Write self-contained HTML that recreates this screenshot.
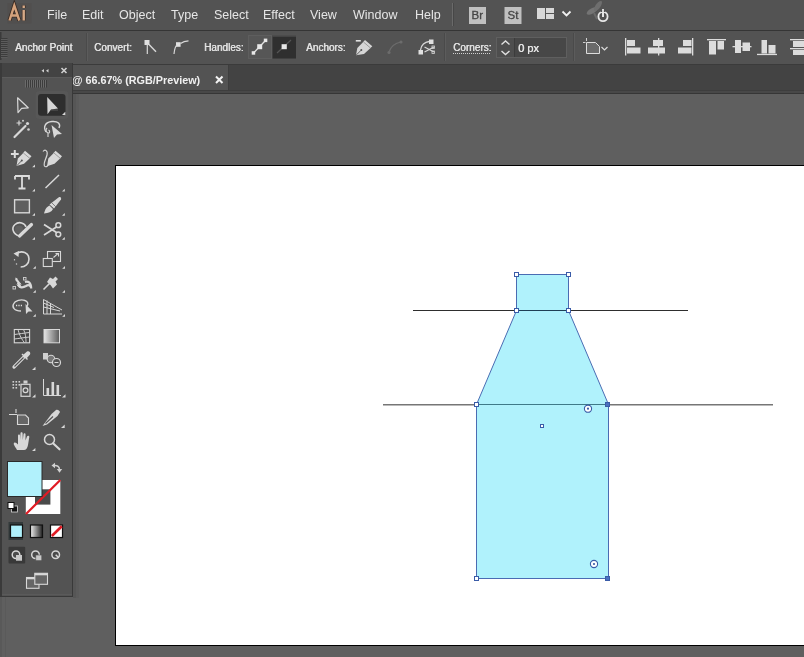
<!DOCTYPE html>
<html><head><meta charset="utf-8">
<style>
*{margin:0;padding:0;box-sizing:border-box}
html,body{width:804px;height:657px;overflow:hidden;background:#5f5f5f;font-family:"Liberation Sans",sans-serif}
.a{position:absolute}
.mi,.cl,.t{will-change:transform}
#menubar{left:0;top:0;width:804px;height:30px;background:#535353}
#mline{left:0;top:30px;width:804px;height:1px;background:#353535}
#ctrl{left:0;top:31px;width:804px;height:33px;background:#535353}
#cline{left:0;top:64px;width:804px;height:1px;background:#3b3b3b}
#tabbar{left:0;top:65px;width:804px;height:25px;background:#434343}
#tab{left:0;top:65px;width:228px;height:25px;background:#535353}
#tline{left:0;top:90px;width:804px;height:4px;background:linear-gradient(#3d3d3d 0,#3d3d3d 1px,#484848 1px,#484848 3px,#363636 3px)}
.mi{top:8px;color:#e6e6e6;font-size:12.5px;white-space:nowrap}
.cl{color:#e2e2e2;font-size:10px;white-space:nowrap;top:41.5px;text-shadow:0.4px 0 0 #e2e2e2}
#artboard{left:115px;top:165px;width:700px;height:481px;background:#fff;border:1px solid #000}
#panel{left:0;top:63px;width:73px;height:534px;background:#535353;border-right:1px solid #3a3a3a;border-bottom:1px solid #3a3a3a}
#phead{left:0;top:63px;width:72px;height:14px;background:#444}
</style></head>
<body>
<div class="a" id="menubar"></div>
<div class="a" id="mline"></div>
<div class="a" id="ctrl"></div>
<div class="a" id="cline"></div>
<div class="a" id="tabbar"></div>
<div class="a" id="tab"></div>
<div class="a" id="tline"></div>

<!-- menu -->
<svg class="a" style="left:0;top:0" width="40" height="30" viewBox="0 0 40 30">
 <rect x="7.5" y="3" width="24" height="20.5" fill="#514f4e"/>
 <path d="M9.5 20.5 L14.3 5.5 L19.3 20.5 M11.3 15.5 L17.5 15.5" fill="none" stroke="#3a2a22" stroke-width="4"/>
 <path d="M23.7 10 L23.7 20.5 M23.7 5.5 L23.7 8" fill="none" stroke="#3a2a22" stroke-width="3.8"/>
 <path d="M9.5 20.5 L14.3 5.5 L19.3 20.5 M11.3 15.5 L17.5 15.5" fill="none" stroke="#d4a27c" stroke-width="2.4"/>
 <path d="M23.7 10 L23.7 20.5 M23.7 5.5 L23.7 8" fill="none" stroke="#d6aa88" stroke-width="2.4"/>
</svg>
<div class="a mi" style="left:47px">File</div>
<div class="a mi" style="left:82px">Edit</div>
<div class="a mi" style="left:119px">Object</div>
<div class="a mi" style="left:171px">Type</div>
<div class="a mi" style="left:214px">Select</div>
<div class="a mi" style="left:263px">Effect</div>
<div class="a mi" style="left:310px">View</div>
<div class="a mi" style="left:353px">Window</div>
<div class="a mi" style="left:415px">Help</div>

<!-- control bar -->
<div class="a cl" style="left:15px">Anchor Point</div>
<div class="a cl" style="left:94px">Convert:</div>
<div class="a cl" style="left:204px">Handles:</div>
<div class="a cl" style="left:306px">Anchors:</div>
<div class="a cl" style="left:453px">Corners:</div>

<!-- tab -->
<div class="a t" style="left:72px;top:73.5px;color:#f0f0f0;font-size:10.8px;font-weight:bold;white-space:nowrap">@ 66.67% (RGB/Preview)</div>


<svg class="a t" style="left:0;top:0" width="804" height="94" viewBox="0 0 804 94">
 <!-- menu separators -->
 <rect x="452" y="3" width="1" height="23" fill="#6a6a6a"/>
 <rect x="453" y="3" width="1" height="23" fill="#474747"/>
 <!-- Br / St -->
 <rect x="469" y="7" width="17" height="17" fill="#c0c0c0"/>
 <text x="477.3" y="19.2" font-size="11.5" text-anchor="middle" fill="#454545" stroke="#454545" stroke-width="0.3" font-family="Liberation Sans">Br</text>
 <rect x="504.5" y="7" width="17" height="17" fill="#c0c0c0"/>
 <text x="513" y="19.2" font-size="11.5" text-anchor="middle" fill="#454545" stroke="#454545" stroke-width="0.3" font-family="Liberation Sans">St</text>
 <!-- workspace -->
 <rect x="537" y="8" width="8" height="11" fill="#d8d8d8"/>
 <rect x="546" y="8" width="8" height="5" fill="#d8d8d8"/>
 <rect x="546" y="14" width="8" height="5" fill="#d8d8d8"/>
 <path d="M562.5 11.5 L566.5 15.5 L570.5 11.5" stroke="#f0f0f0" stroke-width="1.8" fill="none"/>
 <!-- sync -->
 <ellipse cx="592" cy="11" rx="6" ry="2.6" transform="rotate(-30 592 11)" fill="#747474"/>
 <ellipse cx="598" cy="6" rx="6" ry="2.4" transform="rotate(-55 598 6)" fill="#6e6e6e"/>
 <path d="M594 13 L597 19" stroke="#6a6a6a" stroke-width="2"/>
 <circle cx="603" cy="16.5" r="4.6" stroke="#e8e8e8" stroke-width="1.8" fill="none"/>
 <rect x="602.1" y="9" width="1.8" height="8" fill="#e8e8e8"/>
 <rect x="601" y="9" width="4" height="3" fill="#535353"/>
 <rect x="602.1" y="9" width="1.8" height="8" fill="#e8e8e8"/>
 <!-- control bar grip -->
 <rect x="0" y="32" width="1.5" height="28" fill="#3a3a3a"/>
 <g fill="#3c3c3c"><rect x="1" y="38" width="6.5" height="1"/><rect x="1" y="40" width="6.5" height="1"/><rect x="1" y="42" width="6.5" height="1"/><rect x="1" y="44" width="6.5" height="1"/><rect x="1" y="46" width="6.5" height="1"/><rect x="1" y="48" width="6.5" height="1"/><rect x="1" y="50" width="6.5" height="1"/><rect x="1" y="52" width="6.5" height="1"/><rect x="1" y="54" width="6.5" height="1"/><rect x="1" y="56" width="6.5" height="1"/></g>
 <g fill="#5c5c5c"><rect x="1" y="39" width="6.5" height="1"/><rect x="1" y="41" width="6.5" height="1"/><rect x="1" y="43" width="6.5" height="1"/><rect x="1" y="45" width="6.5" height="1"/><rect x="1" y="47" width="6.5" height="1"/><rect x="1" y="49" width="6.5" height="1"/><rect x="1" y="51" width="6.5" height="1"/><rect x="1" y="53" width="6.5" height="1"/><rect x="1" y="55" width="6.5" height="1"/><rect x="1" y="57" width="6.5" height="1"/></g>
 <!-- control separators -->
 <rect x="86" y="33" width="1" height="28" fill="#4a4a4a"/>
 <rect x="87" y="33" width="1" height="28" fill="#5c5c5c"/>
 <rect x="444" y="33" width="1" height="28" fill="#4a4a4a"/>
 <rect x="445" y="33" width="1" height="28" fill="#5c5c5c"/>
 <rect x="573" y="33" width="1" height="28" fill="#4a4a4a"/>
 <rect x="574" y="33" width="1" height="28" fill="#5c5c5c"/>
 <!-- convert icons -->
 <rect x="144.5" y="40" width="5" height="5" fill="#e0e0e0"/>
 <path d="M147.3 44 L147.3 54" stroke="#d8d8d8" stroke-width="1.2"/>
 <path d="M149 44.5 L156 51.8" stroke="#d8d8d8" stroke-width="1.4"/>
 <rect x="176" y="42.2" width="4.6" height="4.6" fill="#e0e0e0"/>
 <path d="M174 54 C174.5 49 175.5 46 177 45 M180.5 43.5 C183 41.5 185.5 40.8 188.5 40.8" stroke="#d8d8d8" stroke-width="1.2" fill="none"/>
 <!-- handles buttons -->
 <rect x="248.5" y="35.5" width="23" height="23" fill="#565656" stroke="#5e5e5e" stroke-width="1"/>
 <path d="M253.5 53 L265.5 40.5" stroke="#e0e0e0" stroke-width="1.3"/>
 <rect x="257.2" y="44.2" width="5" height="5" fill="#e8e8e8"/>
 <rect x="263.8" y="38.6" width="3.5" height="3.5" fill="#e8e8e8"/>
 <rect x="251.7" y="51.2" width="3.5" height="3.5" fill="#e8e8e8"/>
 <rect x="272.5" y="35.5" width="23.5" height="23" fill="#2f2f2f"/>
 <rect x="272.5" y="35.5" width="23.5" height="1" fill="#5a5a5a"/>
 <path d="M277 53 L291 40" stroke="#555" stroke-width="1.2"/>
 <rect x="281.6" y="44.2" width="5.2" height="5" fill="#e8e8e8"/>
 <!-- anchors -->
 <rect x="355.8" y="40" width="5" height="1.6" fill="#e0e0e0"/>
 <path d="M356 55.3 L357.3 48 L362 43.3 L365 40 L372.3 46.2 L369.2 49.2 L364 54 Z" fill="#d6d6d6"/>
 <path d="M356.3 55 L361 50.3" stroke="#535353" stroke-width="0.9"/>
 <circle cx="361.3" cy="50" r="1" fill="#535353"/>
 <path d="M363.5 42 L370.5 48" stroke="#8a8a8a" stroke-width="0.8"/>
 <path d="M389 52 C391 46 395 43 401 42" stroke="#6c6c6c" stroke-width="1.2" fill="none"/>
 <circle cx="389" cy="52.5" r="1.6" fill="#6c6c6c"/><circle cx="401" cy="42" r="1.6" fill="#6c6c6c"/>
 <path d="M420.5 50 C421 45 425 42 429 41.5" stroke="#d8d8d8" stroke-width="1.3" fill="none"/>
 <rect x="418.5" y="50" width="4.5" height="4.5" fill="#e0e0e0"/>
 <rect x="429" y="39.5" width="4.5" height="4.5" fill="#e0e0e0"/>
 <path d="M424.5 47 L434 52 M424.5 52 L434 47" stroke="#d8d8d8" stroke-width="1.2"/>
 <rect x="432" y="46" width="2.5" height="2.5" fill="none" stroke="#d8d8d8" stroke-width="0.8"/>
 <rect x="432" y="51" width="2.5" height="2.5" fill="none" stroke="#d8d8d8" stroke-width="0.8"/>
 <!-- corners dotted underline -->
 <path d="M453 53.5 L490 53.5" stroke="#cfcfcf" stroke-width="1" stroke-dasharray="1 1"/>
 <!-- input -->
 <rect x="496.5" y="37.5" width="70" height="20" fill="#4b4b4b" stroke="#5f5f5f" stroke-width="1"/>
 <rect x="497" y="38" width="17" height="19" fill="#4e4e4e"/>
 <rect x="514" y="38" width="1" height="19" fill="#3c3c3c"/>
 <rect x="515" y="38" width="51" height="19" fill="#474747"/>
 <path d="M501.5 44.5 L505.5 41 L509.5 44.5 M501.5 51 L505.5 54.5 L509.5 51" stroke="#e0e0e0" stroke-width="1.4" fill="none"/>
 <!-- transform icon -->
 <path d="M586.5 42.5 L595.5 42.5 L599.5 46.5 L599.5 53.5 L586.5 53.5 Z" fill="#6a6a6a" stroke="#dcdcdc" stroke-width="1"/>
 <path d="M586.5 38 L586.5 41 M583 42.5 L585.5 42.5" stroke="#cfcfcf" stroke-width="1"/>
 <path d="M601.5 47 L604.5 50 L607.5 47" stroke="#dcdcdc" stroke-width="1.2" fill="none"/>
 <!-- align icons -->
 <g fill="#dcdcdc">
  <rect x="625" y="38" width="1.3" height="17.5"/>
  <rect x="627" y="40" width="8" height="6"/><rect x="627" y="47.5" width="13.5" height="6"/>
  <rect x="658" y="38" width="1.3" height="17.5"/>
  <rect x="653" y="40" width="10" height="6"/><rect x="648" y="47.5" width="17" height="6"/>
  <rect x="692" y="38" width="1.3" height="17.5"/>
  <rect x="683" y="40" width="8.5" height="6"/><rect x="678" y="47.5" width="13.5" height="6"/>
  <rect x="707" y="39" width="19" height="1.3"/>
  <rect x="709" y="41" width="7" height="13.5"/><rect x="717.5" y="41" width="6.5" height="8.5"/>
  <rect x="732.5" y="46" width="19" height="1.3"/>
  <rect x="735" y="40" width="6" height="13"/><rect x="742.5" y="42.5" width="7.5" height="8.5"/>
  <rect x="757" y="53.8" width="20" height="1.3"/>
  <rect x="761.5" y="40" width="5.5" height="13.5"/><rect x="768.5" y="45" width="7" height="8.5"/>
  <rect x="790" y="39" width="14" height="1.3"/>
  <rect x="793" y="41" width="11" height="6"/>
  <rect x="790" y="48" width="14" height="1.3"/>
  <rect x="793" y="50" width="11" height="5"/>
 </g>
 <!-- tab close -->
 <path d="M216 76.5 L222.5 83 M222.5 76.5 L216 83" stroke="#f2f2f2" stroke-width="2"/>
 <rect x="228" y="65" width="1" height="25" fill="#3e3e3e"/>
</svg>

<div class="a" style="left:73px;top:94px;width:3px;height:504px;background:#565656"></div>
<div class="a" style="left:76px;top:94px;width:3px;height:504px;background:#5b5b5b"></div>
<div class="a" style="left:0;top:597px;width:2px;height:60px;background:#595959"></div>
<div class="a" style="left:5px;top:597px;width:1px;height:60px;background:#5a5a5a"></div>
<!-- artboard -->
<div class="a" id="artboard"></div>


<svg class="a" style="left:0;top:0" width="804" height="657" viewBox="0 0 804 657">
 <line x1="413" y1="310.5" x2="688" y2="310.5" stroke="#2e2e2e" stroke-width="1"/>
 <line x1="383" y1="404.7" x2="773" y2="404.7" stroke="#767676" stroke-width="1.5"/>
 <path d="M516.5 274.5 H568.5 V310.5 H516.5 Z" fill="#b0f2fc" stroke="#4a6cb3" stroke-width="1"/>
 <path d="M516.5 310.5 L568.5 310.5 L608.5 404.5 L476.5 404.5 Z" fill="#b0f2fc" stroke="#4a6cb3" stroke-width="1"/>
 <path d="M476.5 404.5 H608.5 V578.5 H476.5 Z" fill="#b0f2fc" stroke="#4a6cb3" stroke-width="1"/>
 <line x1="516.5" y1="310.5" x2="568.5" y2="310.5" stroke="#1f3f55" stroke-width="1"/>
 <line x1="476.5" y1="404.5" x2="608.5" y2="404.5" stroke="#3f7a88" stroke-width="1.2"/>
 <g fill="#fff" stroke="#3a5ca8" stroke-width="1">
  <rect x="514.5" y="272.5" width="4" height="4"/>
  <rect x="566.5" y="272.5" width="4" height="4"/>
  <rect x="514.5" y="308.5" width="4" height="4"/>
  <rect x="566.5" y="308.5" width="4" height="4"/>
  <rect x="474.5" y="402.5" width="4" height="4"/>
  <rect x="474.5" y="576.5" width="4" height="4"/>
  <rect x="540.5" y="424.5" width="3" height="3"/>
 </g>
 <g fill="#4a70c0" stroke="#3a5ca8" stroke-width="1">
  <rect x="605.5" y="402.5" width="4" height="4"/>
  <rect x="605.5" y="576.5" width="4" height="4"/>
 </g>
 <g fill="#fff" stroke="#3a5ca8" stroke-width="1.1">
  <circle cx="588" cy="408.7" r="3.6"/>
  <circle cx="594" cy="564" r="3.6"/>
 </g>
 <circle cx="588" cy="408.7" r="1.1" fill="#3a5ca8"/>
 <circle cx="594" cy="564" r="1.1" fill="#3a5ca8"/>
</svg>

<!-- panel -->

<svg class="a" style="left:0;top:0" width="80" height="600" viewBox="0 0 80 600">
 <rect x="0" y="63" width="72" height="533" fill="#535353"/>
 <rect x="0" y="63" width="2" height="533" fill="#3a3a3a"/>
 <rect x="2" y="63" width="70" height="14" fill="#434343"/>
 <rect x="72" y="63" width="1" height="534" fill="#393939"/>
 <rect x="0" y="596" width="73" height="1" fill="#393939"/>
 <rect x="2" y="594" width="70" height="1" fill="#5a5a5a"/>
 <path d="M44 69 L41.5 70.7 L44 72.5 Z M48.5 69 L46 70.7 L48.5 72.5 Z" fill="#cfcfcf"/>
 <path d="M61.5 68 L66.5 73 M66.5 68 L61.5 73" stroke="#cfcfcf" stroke-width="1.6"/>
 <g><rect x="25" y="80" width="1" height="7.5" fill="#6a6a6a"/><rect x="26" y="80" width="1" height="7.5" fill="#3c3c3c"/><rect x="27" y="80" width="1" height="7.5" fill="#6a6a6a"/><rect x="28" y="80" width="1" height="7.5" fill="#3c3c3c"/><rect x="29" y="80" width="1" height="7.5" fill="#6a6a6a"/><rect x="30" y="80" width="1" height="7.5" fill="#3c3c3c"/><rect x="31" y="80" width="1" height="7.5" fill="#6a6a6a"/><rect x="32" y="80" width="1" height="7.5" fill="#3c3c3c"/><rect x="33" y="80" width="1" height="7.5" fill="#6a6a6a"/><rect x="34" y="80" width="1" height="7.5" fill="#3c3c3c"/><rect x="35" y="80" width="1" height="7.5" fill="#6a6a6a"/><rect x="36" y="80" width="1" height="7.5" fill="#3c3c3c"/><rect x="37" y="80" width="1" height="7.5" fill="#6a6a6a"/><rect x="38" y="80" width="1" height="7.5" fill="#3c3c3c"/><rect x="39" y="80" width="1" height="7.5" fill="#6a6a6a"/><rect x="40" y="80" width="1" height="7.5" fill="#3c3c3c"/><rect x="41" y="80" width="1" height="7.5" fill="#6a6a6a"/><rect x="42" y="80" width="1" height="7.5" fill="#3c3c3c"/><rect x="43" y="80" width="1" height="7.5" fill="#6a6a6a"/><rect x="44" y="80" width="1" height="7.5" fill="#3c3c3c"/><rect x="45" y="80" width="1" height="7.5" fill="#6a6a6a"/><rect x="46" y="80" width="1" height="7.5" fill="#3c3c3c"/></g>
 <rect x="2" y="77" width="70" height="1" fill="#5b5b5b"/>
 <!-- selected button -->
 <rect x="35.5" y="91" width="33" height="28" rx="4" fill="#575757"/>
 <rect x="38" y="94" width="27.5" height="21.7" rx="3" fill="#2e2e2e"/>
 <!-- selection -->
 <path d="M17.6 97.8 L28.2 107.8 L21.6 108.4 L18 112.6 Z" fill="none" stroke="#d8d8d8" stroke-width="1.2" stroke-linejoin="round"/>
 <!-- direct selection -->
 <path d="M47.2 96.9 L58 108.4 L51 109.4 L47.5 114.3 Z" fill="#d6d6d6"/>
 <path d="M51 110 L58 110" stroke="#666" stroke-width="0.8"/>
 <path d="M62 115 L65.3 111.8 L65.3 115 Z" fill="#d8d8d8"/>
 <!-- magic wand -->
 <path d="M14.5 137 L25.5 126" stroke="#d8d8d8" stroke-width="2.2" stroke-linecap="round"/>
 <path d="M19 120.5 L19 125.5 M16.5 123 L21.5 123" stroke="#d8d8d8" stroke-width="1.2"/>
 <circle cx="27.5" cy="123.5" r="1.6" fill="#d8d8d8"/>
 <circle cx="28.5" cy="129.5" r="1.3" fill="#d0d0d0"/>
 <circle cx="23" cy="120.8" r="1" fill="#d0d0d0"/>
 <!-- lasso -->
 <path d="M46 132 C43 127 45 122 52 121.5 C58 121 61 124 59 128" fill="none" stroke="#d8d8d8" stroke-width="1.4"/>
 <path d="M47 128 C45 130 46.5 133 48.5 133 C50 133 50 130.5 48.5 130 M48 133 L48 137" fill="none" stroke="#d0d0d0" stroke-width="1.2"/>
 <path d="M51.5 125 L62 134 L57 134.5 L54 138 Z" fill="#d8d8d8"/>
 <!-- add anchor pen -->
 <path d="M14.8 150 L14.8 158 M10.9 154 L18.7 154" stroke="#dcdcdc" stroke-width="2"/>
 <path d="M16.5 166 L17.8 158.5 L22.5 153.8 L25 150.8 L31.5 156.3 L28.8 159.2 L24 163.8 Z" fill="#d8d8d8"/>
 <path d="M16.8 165.7 L21.5 160.8" stroke="#535353" stroke-width="0.9"/>
 <circle cx="21.8" cy="160.5" r="1" fill="#535353"/>
 <path d="M23.2 152.8 L30 158.5" stroke="#8a8a8a" stroke-width="0.8"/>
 <path d="M32.2 167.3 L35 164.5 L35 167.3 Z" fill="#d8d8d8"/>
 <!-- curvature pen -->
 <path d="M43 151.5 C45 149 48 150.5 47 155 C46 159 43 163 44.5 166 C45.5 167.5 47.5 166.5 48 165" fill="none" stroke="#d6d6d6" stroke-width="1.2"/>
 <path d="M47 166.3 L48.3 158.5 L53 153.8 L55.5 150.8 L62 156.3 L59.3 159.2 L54.5 163.8 Z" fill="#d8d8d8"/>
 <path d="M53.7 152.8 L60.5 158.5" stroke="#8a8a8a" stroke-width="0.8"/>
 <!-- type -->
 <path d="M15 176 L29 176 L29 179.5 M15 176 L15 179.5 M22 176 L22 188.5 M18.5 188.5 L25.5 188.5" stroke="#dcdcdc" stroke-width="1.8" fill="none"/>
 <path d="M32.2 191.5 L35 188.7 L35 191.5 Z" fill="#d8d8d8"/>
 <!-- line -->
 <path d="M45.5 188 L59 175" stroke="#d8d8d8" stroke-width="1.5"/>
 <path d="M62 191.5 L64.8 188.7 L64.8 191.5 Z" fill="#d8d8d8"/>
 <!-- rectangle -->
 <rect x="14.6" y="199.8" width="14.8" height="13" fill="#5f5f5f" stroke="#d8d8d8" stroke-width="1.4"/>
 <path d="M32.2 215.8 L35 213 L35 215.8 Z" fill="#d8d8d8"/>
 <!-- paintbrush -->
 <path d="M44 213.5 C45 210 46 207 49.5 205.5 L53 209 C51.5 212 48.5 213 44 213.5 Z" fill="#d8d8d8"/>
 <path d="M49.5 204.5 L58.5 197.5 C60.5 196.5 61.5 197.5 61 199.5 L54 208.5 Z" fill="#d8d8d8"/>
 <path d="M52 203 L56 207" stroke="#6a6a6a" stroke-width="0.8"/>
 <path d="M62 215.8 L64.8 213 L64.8 215.8 Z" fill="#d8d8d8"/>
 <!-- shaper -->
 <path d="M19 236 C13 234 11 228 15 224.5 C19 221 25 223 26 227" fill="none" stroke="#d8d8d8" stroke-width="1.6"/>
 <circle cx="19" cy="229.5" r="4" fill="#5f5f5f"/>
 <path d="M19.5 236 L31.5 224.5" stroke="#d8d8d8" stroke-width="3.2" stroke-linecap="round"/>
 <path d="M32.2 239.8 L35 237 L35 239.8 Z" fill="#d8d8d8"/>
 <!-- scissors -->
 <path d="M44 235 L56.5 227 M44 224.5 L56.5 232.5" stroke="#d8d8d8" stroke-width="1.7"/>
 <circle cx="58.3" cy="225.2" r="2.4" fill="none" stroke="#d8d8d8" stroke-width="1.5"/>
 <circle cx="58.3" cy="234.3" r="2.4" fill="none" stroke="#d8d8d8" stroke-width="1.5"/>
 <path d="M62 239.8 L64.8 237 L64.8 239.8 Z" fill="#d8d8d8"/>
 <!-- rotate -->
 <path d="M16 253.5 C22 250 29 252.5 29 259 C29 264 25 267 20.5 267" fill="none" stroke="#d8d8d8" stroke-width="1.6" stroke-dasharray="30 1.5 1.5 1.5"/>
 <path d="M13.5 253.5 L19 251 L18.5 257 Z" fill="#d8d8d8"/>
 <path d="M14.5 259 L14.5 260.5 M16 263.5 L17 264.5" stroke="#bdbdbd" stroke-width="1.2"/>
 <path d="M33 268.8 L35.8 266 L35.8 268.8 Z" fill="#d8d8d8"/>
 <!-- scale -->
 <rect x="47.5" y="251.5" width="13" height="10" fill="none" stroke="#d8d8d8" stroke-width="1.1"/>
 <rect x="43.3" y="258.5" width="9" height="8" fill="#535353" stroke="#d8d8d8" stroke-width="1.1"/>
 <path d="M53.5 257.5 L58 253.5 M55.5 253.5 L58.5 253.5 L58.5 256.5" stroke="#d8d8d8" stroke-width="1.1" fill="none"/>
 <path d="M62.2 268.8 L65 266 L65 268.8 Z" fill="#d8d8d8"/>
 <!-- puppet/width -->
 <path d="M16.5 278 C15 281 20 281 19 284.5 C18 287 22 288.5 26 286 C29 284 31 286 31.2 288.5 C31 282 28 281 25 282" fill="none" stroke="#d8d8d8" stroke-width="2.2"/>
 <circle cx="19" cy="284.5" r="1.8" fill="none" stroke="#d8d8d8" stroke-width="1"/>
 <rect x="23.5" y="277.5" width="2.5" height="2.5" fill="none" stroke="#d0d0d0" stroke-width="0.9"/>
 <rect x="13" y="286.5" width="2.5" height="2.5" fill="none" stroke="#d0d0d0" stroke-width="0.9"/>
 <path d="M33 292.8 L35.8 290 L35.8 292.8 Z" fill="#d8d8d8"/>
 <!-- pin -->
 <path d="M50 277.5 L53 279 L55.5 276.5 L58 279 L55.5 281.5 L57 284.5 L53 288.5 L50.5 285 L47 282 Z" fill="#d8d8d8"/>
 <path d="M43.5 289.5 L49.5 283.5" stroke="#d8d8d8" stroke-width="1.6"/>
 <path d="M62.2 292.8 L65 290 L65 292.8 Z" fill="#d8d8d8"/>
 <!-- shape builder -->
 <path d="M21 311 C14 311 12 307 13.5 304 C15 300.5 21 299 25 300.5 C28 301.5 28.5 304 27 306" fill="none" stroke="#d8d8d8" stroke-width="1.4"/>
 <path d="M16 305.5 L23 305.5" stroke="#e0e0e0" stroke-width="1.4" stroke-dasharray="1.2 1.2"/>
 <path d="M25.5 304 L32.5 311.5 L28.5 311.5 L26 314 Z" fill="#d8d8d8"/>
 <path d="M33 316.8 L35.8 314 L35.8 316.8 Z" fill="#d8d8d8"/>
 <!-- perspective grid -->
 <path d="M43.5 299.5 L43.5 314 L62 314 M43.5 299.5 L62 310 M43.5 303 L54 307.5 M43.5 307 L60 311 M47 300.5 L47 314 M50.5 303 L50.5 314" fill="none" stroke="#d6d6d6" stroke-width="1"/>
 <path d="M62.2 316.8 L65 314 L65 316.8 Z" fill="#d8d8d8"/>
 <!-- mesh -->
 <rect x="14.3" y="329.5" width="15.3" height="13.3" fill="#474747" stroke="#d8d8d8" stroke-width="1.1"/>
 <path d="M18 329.5 C19 333 20 337 24.5 342.8 M23.5 329.5 C25.5 333 26 338 26 342.8 M14.3 334.5 C19 334 24 333 29.6 332.5 M14.3 339 C19 338.5 24 337.5 29.6 337" fill="none" stroke="#cfcfcf" stroke-width="1"/>
 <!-- gradient -->
 <defs><linearGradient id="gr" x1="0" x2="1"><stop offset="0" stop-color="#e6e6e6"/><stop offset="1" stop-color="#5a5a5a"/></linearGradient>
 <linearGradient id="gr2" x1="0" x2="1"><stop offset="0" stop-color="#f0f0f0"/><stop offset="1" stop-color="#222"/></linearGradient></defs>
 <rect x="44" y="329.5" width="15.5" height="13.3" fill="url(#gr)" stroke="#d8d8d8" stroke-width="1"/>
 <!-- eyedropper -->
 <path d="M14 367 L24 357" stroke="#d8d8d8" stroke-width="3.2" stroke-linecap="round"/>
 <path d="M14.5 366.5 L23.5 357.5" stroke="#535353" stroke-width="1.1"/>
 <path d="M23 355 L27 351.5 C29 350.5 31 352.5 30 354.5 L26.5 358.5 Z" fill="#d8d8d8"/>
 <path d="M22 354 L27.5 359.5" stroke="#d8d8d8" stroke-width="1.4"/>
 <path d="M32 370 L35.5 366.7 L35.5 370 Z" fill="#d8d8d8"/>
 <!-- blend -->
 <rect x="43" y="353" width="5" height="6.5" fill="#d0d0d0"/>
 <circle cx="51" cy="359" r="3.8" fill="#777" stroke="#d8d8d8" stroke-width="1.1"/>
 <circle cx="56.5" cy="362.5" r="4" fill="#535353" stroke="#d8d8d8" stroke-width="1.2"/>
 <path d="M54.5 362.5 L58.5 362.5" stroke="#d8d8d8" stroke-width="1"/>
 <!-- symbol sprayer -->
 <g fill="#cfcfcf"><rect x="12.5" y="381" width="1.6" height="1.6"/><rect x="15.5" y="381" width="1.6" height="1.6"/><rect x="18.5" y="381" width="1.6" height="1.6"/>
 <rect x="12.5" y="384" width="1.6" height="1.6"/><rect x="15.5" y="384" width="1.6" height="1.6"/><rect x="18.5" y="384" width="1.6" height="1.6"/>
 <rect x="12.5" y="387" width="1.6" height="1.6"/><rect x="15.5" y="387" width="1.6" height="1.6"/></g>
 <rect x="23.5" y="380.5" width="4" height="3" fill="#d0d0d0"/>
 <rect x="21" y="384.3" width="9" height="12" fill="none" stroke="#d8d8d8" stroke-width="1.2"/>
 <circle cx="25.5" cy="390.3" r="2.4" fill="none" stroke="#d8d8d8" stroke-width="1.2"/>
 <path d="M32 397.5 L35.5 394.2 L35.5 397.5 Z" fill="#d8d8d8"/>
 <!-- column graph -->
 <path d="M43.5 379 L43.5 395.5 L61 395.5" fill="none" stroke="#d8d8d8" stroke-width="1"/>
 <rect x="46.5" y="388" width="2.6" height="7" fill="#d8d8d8"/>
 <rect x="51.5" y="382" width="2.6" height="13" fill="#d8d8d8"/>
 <rect x="56.5" y="385" width="2.6" height="10" fill="#d8d8d8"/>
 <path d="M62 397.5 L65.5 394.2 L65.5 397.5 Z" fill="#d8d8d8"/>
 <!-- artboard -->
 <path d="M9 414.5 L17 414.5 M16 409 L16 413" stroke="#d8d8d8" stroke-width="1.1"/>
 <path d="M17.5 415 L25.5 415 L28.5 418 L28.5 424.5 L17.5 424.5 Z" fill="#666" stroke="#d8d8d8" stroke-width="1.1"/>
 <!-- slice -->
 <path d="M42.5 426 L51.5 414 L56 410 C57.5 409 59.5 410.5 60 412 L57.5 416 L47 424.5 Z" fill="#d8d8d8"/>
 <path d="M45.5 423.5 L53 416.5" stroke="#535353" stroke-width="1.1"/>
 <path d="M61 428 L64.7 424.5 L64.7 428 Z" fill="#d8d8d8"/>
 <!-- hand -->
 <path d="M17 450 C15 446 13 444.5 14 443 C15 442 16.5 443 18 444.5 L18 435.5 C18 434 20 434 20 435.5 L20 440 L20.5 433.3 C20.5 432 22.6 432 22.6 433.3 L22.8 440 L23.5 434.3 C23.6 433 25.5 433 25.5 434.3 L25.5 440.5 L27 436.5 C27.5 435.3 29.5 435.6 29.3 437 L28 445 C27.5 448 26 450 24 450 Z" fill="#d8d8d8"/>
 <path d="M32 451 L35.4 448 L35.4 451 Z" fill="#d8d8d8"/>
 <!-- zoom -->
 <circle cx="49.5" cy="439.5" r="5" fill="#585858" stroke="#d8d8d8" stroke-width="1.5"/>
 <path d="M53.3 443.5 L59.5 449.3" stroke="#d8d8d8" stroke-width="2.2" stroke-linecap="round"/>
 <!-- fill/stroke -->
 <rect x="25.8" y="480" width="34.5" height="34" fill="#ffffff"/>
 <rect x="35" y="489.3" width="15.4" height="15.3" fill="#4a4a4a"/>
 <path d="M26 514 L60.3 480" stroke="#e01b24" stroke-width="2.2"/>
 <rect x="7.5" y="461.5" width="34.5" height="35" fill="#b1f1fc" stroke="#2a2a2a" stroke-width="1"/>
 <path d="M54.5 465.5 C57.5 465.3 59.3 466.5 59.5 469.5" fill="none" stroke="#d0d0d0" stroke-width="1.5"/>
 <path d="M51.5 465.5 L55 462.8 L55 468.2 Z M56.8 469 L62.2 469 L59.5 472.8 Z" fill="#d0d0d0"/>
 <rect x="11.5" y="506" width="6" height="6" fill="#111" stroke="#d8d8d8" stroke-width="0.8"/>
 <rect x="8" y="502.5" width="6" height="6" fill="#fff" stroke="#111" stroke-width="1"/>
 <!-- color buttons -->
 <rect x="8.5" y="522" width="14.5" height="18" fill="#333a3b"/>
 <rect x="10.5" y="525" width="12" height="12.5" fill="#aef0fb" stroke="#111" stroke-width="1.2"/>
 <rect x="30.5" y="525" width="12" height="12.5" fill="url(#gr2)" stroke="#111" stroke-width="1.2"/>
 <rect x="50.5" y="525" width="12" height="12.5" fill="#fff" stroke="#111" stroke-width="1.2"/>
 <path d="M51.8 536 L61.8 526.3" stroke="#e01b24" stroke-width="2.6"/>
 <!-- draw modes -->
 <rect x="8.5" y="546.7" width="16.7" height="16.7" rx="1" fill="#393939"/>
 <g fill="#4a4a4a" stroke="#d6d6d6" stroke-width="1.5">
  <circle cx="16" cy="554.7" r="3.8"/>
  <circle cx="35.5" cy="554.7" r="3.8"/>
  <circle cx="55.7" cy="554.7" r="3.8"/>
 </g>
 <rect x="16" y="555" width="6" height="5.7" fill="#c8c8c8"/>
 <rect x="35.8" y="555" width="6" height="5.7" fill="#c8c8c8" stroke="#535353" stroke-width="0.6"/>
 <path d="M55.7 554.7 L58.5 557.5" stroke="#d6d6d6" stroke-width="1.5"/>
 <!-- screen mode -->
 <rect x="26.5" y="577.5" width="12.5" height="10.8" fill="#666" stroke="#d8d8d8" stroke-width="1.1"/>
 <rect x="26.5" y="577.5" width="12.5" height="1.8" fill="#d8d8d8"/>
 <rect x="34.8" y="573.3" width="12.7" height="11" fill="#666" stroke="#d8d8d8" stroke-width="1.1"/>
 <rect x="34.8" y="573.3" width="12.7" height="2" fill="#d8d8d8"/>
</svg>


<div class="a cl" style="left:518px;top:42px;color:#e8e8e8;font-size:11px">0 px</div>
</body></html>
